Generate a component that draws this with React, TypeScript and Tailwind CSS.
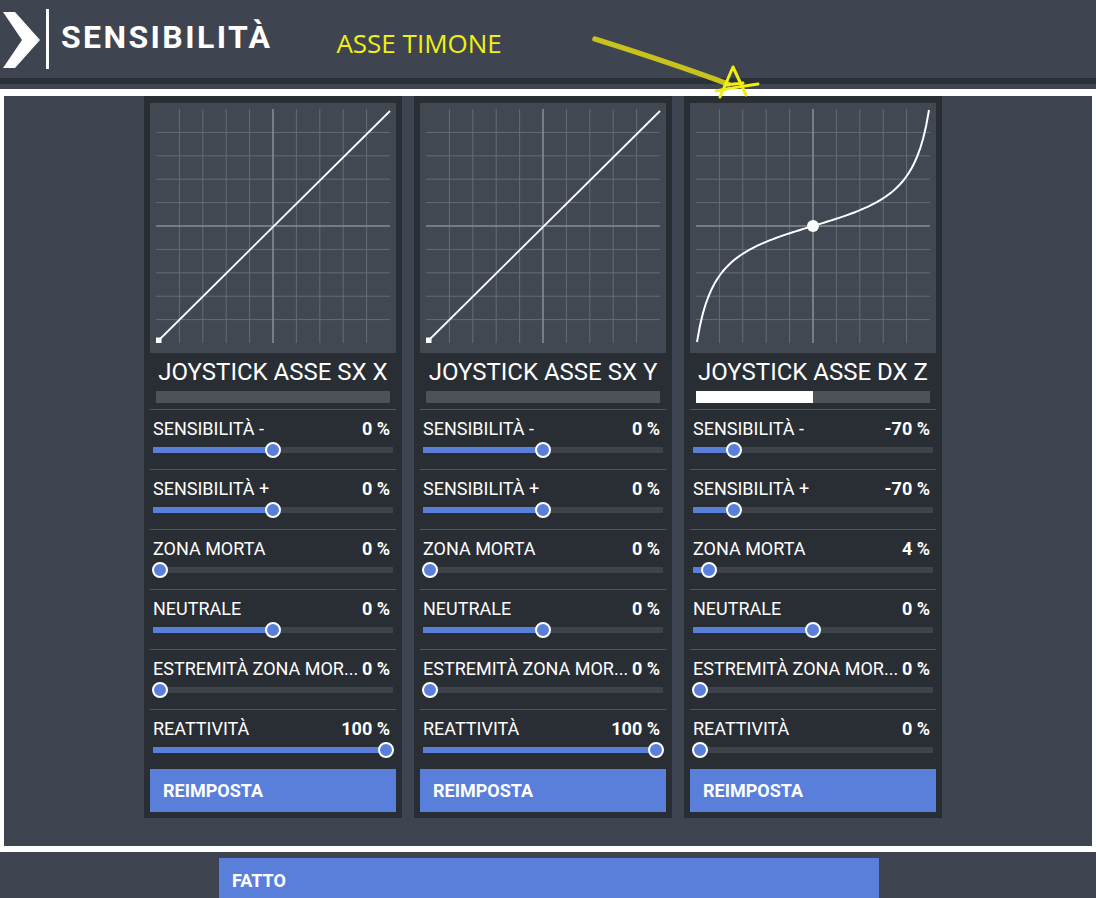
import React from "react";

type Row = { label: string; value: string; p: number };
type Panel = { title: string; bar: number; curve: boolean; rows: Row[] };

const PANELS: Panel[] = [
  {
    title: "JOYSTICK ASSE SX X",
    bar: 0,
    curve: false,
    rows: [
      { label: "SENSIBILITÀ -", value: "0 %", p: 0.5 },
      { label: "SENSIBILITÀ +", value: "0 %", p: 0.5 },
      { label: "ZONA MORTA", value: "0 %", p: 0 },
      { label: "NEUTRALE", value: "0 %", p: 0.5 },
      { label: "ESTREMITÀ ZONA MOR...", value: "0 %", p: 0 },
      { label: "REATTIVITÀ", value: "100 %", p: 1 },
    ],
  },
  {
    title: "JOYSTICK ASSE SX Y",
    bar: 0,
    curve: false,
    rows: [
      { label: "SENSIBILITÀ -", value: "0 %", p: 0.5 },
      { label: "SENSIBILITÀ +", value: "0 %", p: 0.5 },
      { label: "ZONA MORTA", value: "0 %", p: 0 },
      { label: "NEUTRALE", value: "0 %", p: 0.5 },
      { label: "ESTREMITÀ ZONA MOR...", value: "0 %", p: 0 },
      { label: "REATTIVITÀ", value: "100 %", p: 1 },
    ],
  },
  {
    title: "JOYSTICK ASSE DX Z",
    bar: 0.5,
    curve: true,
    rows: [
      { label: "SENSIBILITÀ -", value: "-70 %", p: 0.15 },
      { label: "SENSIBILITÀ +", value: "-70 %", p: 0.15 },
      { label: "ZONA MORTA", value: "4 %", p: 0.04 },
      { label: "NEUTRALE", value: "0 %", p: 0.5 },
      { label: "ESTREMITÀ ZONA MOR...", value: "0 %", p: 0 },
      { label: "REATTIVITÀ", value: "0 %", p: 0 },
    ],
  },
];

const curvePath = () => {
  const b = 1.35;
  const pts: string[] = [];
  for (let i = 0; i <= 80; i++) {
    const x = -1 + (2 * i) / 80;
    const y = Math.tan(b * x) / Math.tan(b);
    pts.push(`${(123 + x * 116).toFixed(2)},${(123 - y * 116).toFixed(2)}`);
  }
  return "M" + pts.join(" L");
};

const Graph = ({ curve }: { curve: boolean }) => {
  const steps = [1, 2, 3, 4, 6, 7, 8, 9];
  return (
    <div className="w-[246px] h-[250px] bg-[#414852]">
      <svg width="246" height="250" viewBox="0 0 246 250">
        {steps.map((i) => (
          <g key={i} stroke="#656c75" strokeWidth="1">
            <line x1={6 + i * 23.4} y1="6" x2={6 + i * 23.4} y2="240" />
            <line x1="6" y1={6 + i * 23.4} x2="240" y2={6 + i * 23.4} />
          </g>
        ))}
        <line x1="123" y1="6" x2="123" y2="240" stroke="#868c94" strokeWidth="1.6" />
        <line x1="6" y1="123" x2="240" y2="123" stroke="#868c94" strokeWidth="1.6" />
        {curve ? (
          <>
            <path d={curvePath()} fill="none" stroke="#fff" strokeWidth="2" />
            <circle cx="123" cy="123" r="6" fill="#fff" />
          </>
        ) : (
          <>
            <line x1="9" y1="237" x2="240" y2="8" stroke="#fff" strokeWidth="1.8" />
            <rect x="6" y="234.5" width="5.5" height="5.5" fill="#fff" />
          </>
        )}
      </svg>
    </div>
  );
};

const Slider = ({ p }: { p: number }) => {
  const pos = 7 + p * 226;
  return (
    <div className="h-[20px] flex items-center">
      <div className="relative w-[240px] h-[6px] bg-[#3e434b]">
        <div className="absolute left-0 top-0 h-full bg-[#5a7fdb]" style={{ width: pos }} />
        <div
          className="absolute top-1/2 w-[16px] h-[16px] -mt-[8px] -ml-[8px] rounded-full bg-[#5a7fdb] border-2 border-white"
          style={{ left: pos }}
        />
      </div>
    </div>
  );
};

const PanelCard = ({ panel }: { panel: Panel }) => (
  <div className="w-[258px] h-[722px] bg-[#292d34] px-[6px] pt-[7px] flex flex-col">
    <Graph curve={panel.curve} />
    <div className="h-[56px] flex flex-col items-center">
      <div className="mt-[5px] h-[28px] leading-[28px] text-[24px] text-white whitespace-nowrap">
        {panel.title}
      </div>
      <div className="mt-[5px] w-[234px] h-[12px] bg-[#4d5259]">
        <div className="h-full bg-white" style={{ width: `${panel.bar * 100}%` }} />
      </div>
    </div>
    {panel.rows.map((r) => (
      <div key={r.label} className="h-[60px] border-t border-[#52575e] pt-[9px] pl-[3px]">
        <div className="h-[20px] leading-[20px] text-[18px] text-white flex justify-between pr-[6px] whitespace-nowrap">
          <span>{r.label}</span>
          <span className="font-bold">{r.value}</span>
        </div>
        <div className="pt-[1px]">
          <Slider p={r.p} />
        </div>
      </div>
    ))}
    <button className="h-[43px] bg-[#5a7fdb] text-left pl-[13px] text-white font-bold text-[18px]">
      REIMPOSTA
    </button>
  </div>
);

export default function App() {
  return (
    <div
      className="relative w-[1096px] h-[898px] overflow-hidden bg-[#3e4550]"
      style={{ fontFamily: "Roboto, 'Liberation Sans', sans-serif" }}
    >
      <div className="h-[78px] flex items-start">
        <svg width="44" height="78" viewBox="0 0 44 78" className="shrink-0">
          <polygon points="3,12 15,12 40,40 15,68 3,68 22,40" fill="#fff" />
        </svg>
        <div className="ml-[2px] mt-[9px] w-[3px] h-[60px] bg-white" />
        <div className="ml-[12px] mt-[19px] h-[36px] leading-[36px] text-[32px] font-bold tracking-[2.4px] text-white">
          SENSIBILITÀ
        </div>
        <div
          className="ml-[64px] mt-[28px] h-[30px] leading-[30px] text-[26px] text-[#f2ef12]"
          style={{ fontFamily: "'Open Sans', sans-serif" }}
        >
          ASSE TIMONE
        </div>
      </div>
      <div className="h-[6px] bg-[#2b2f36]" />
      <div className="h-[5px]" />
      <div className="h-[763px] border-t-[7px] border-x-[4px] border-b-[6px] border-white flex gap-[12px] pl-[140px]">
        {PANELS.map((p) => (
          <PanelCard key={p.title} panel={p} />
        ))}
      </div>
      <div className="pt-[6px] pl-[219px]">
        <button className="w-[660px] h-[44px] bg-[#5a7fdb] text-left pl-[13px] text-white font-bold text-[18px]">
          FATTO
        </button>
      </div>
      <svg
        className="absolute left-0 top-0 pointer-events-none"
        width="1096"
        height="120"
        viewBox="0 0 1096 120"
      >
        <path
          d="M595,39 C630,50 680,66 728,84"
          fill="none"
          stroke="#c9c21c"
          strokeWidth="5.5"
          strokeLinecap="round"
        />
        <path
          d="M733,67 L720,97 M733,67 L746,95 M716,91 C730,88 745,86 758,84 M725,85 L743,83"
          fill="none"
          stroke="#f2ee10"
          strokeWidth="3"
          strokeLinecap="round"
        />
      </svg>
    </div>
  );
}
